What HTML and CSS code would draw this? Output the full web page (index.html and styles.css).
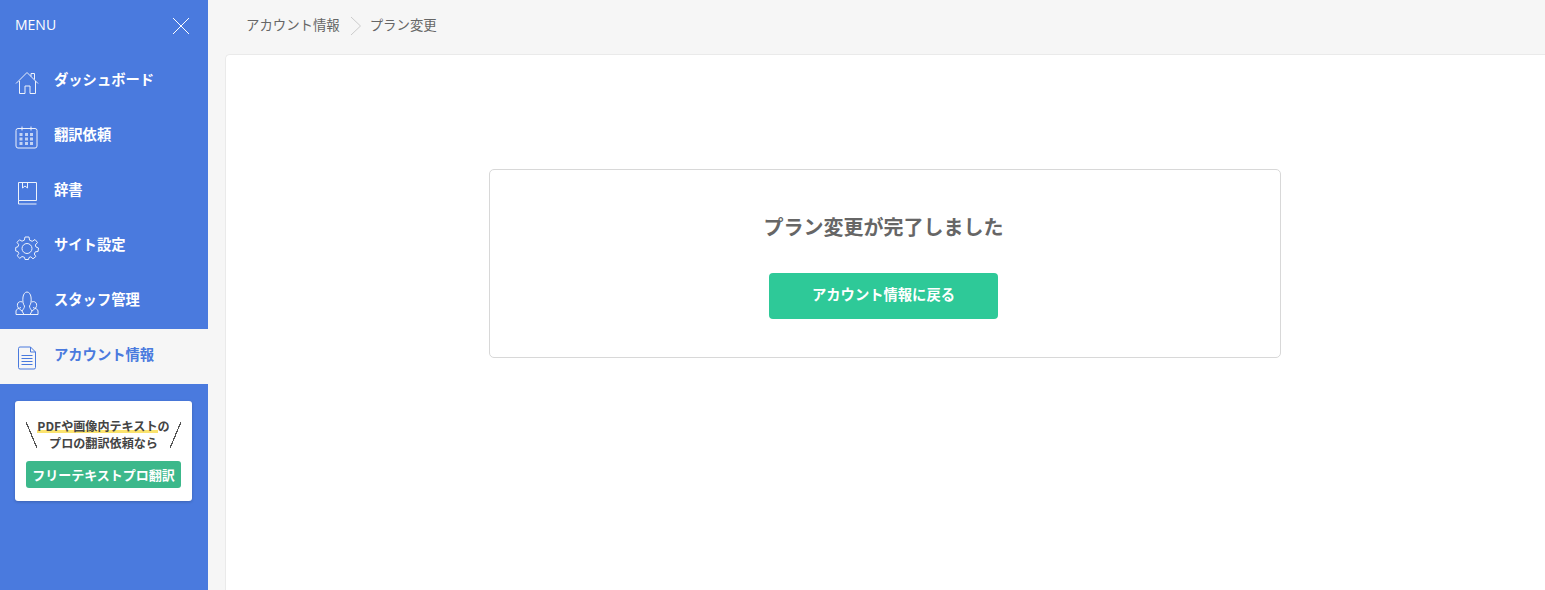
FILE: index.html
```html
<!DOCTYPE html>
<html lang="ja">
<head>
  <meta charset="UTF-8">
  <meta name="viewport" content="width=device-width, initial-scale=1.0">
  <title>アカウント情報</title>
  <link rel="stylesheet" href="styles.css">
</head>
<body>
  <div class="sidebar">
    <div class="menu-head">
      <span>MENU</span>
      <svg class="close-icon" width="18" height="18" viewBox="0 0 18 18"><path d="M1 1 L17 17 M17 1 L1 17"/></svg>
    </div>

    <a class="menu-item">
      <svg class="icon" width="24" height="24" viewBox="0 0 24 24"><path d="M1 12.500 L12 1.500 L23 12.500 M4.500 10 V22.500 H10 V15 H15 V22.500 H20.500 V10 M16 5.500 V2.500 H19.500 V8.500"/></svg>
      <span>ダッシュボード</span>
    </a>
    <a class="menu-item">
      <svg class="icon" width="24" height="24" viewBox="0 0 24 24"><rect x="1" y="2.500" width="21" height="19.500" rx="2"/><path d="M7 0.500 V4.500 M16 0.500 V4.500"/><path class="dots" d="M4.500 7 h3 v3 h-3z M10 7 h3 v3 h-3z M15 7 h3 v3 h-3z M4.500 11.500 h3 v3 h-3z M10 11.500 h3 v3 h-3z M15 11.500 h3 v3 h-3z M4.500 16 h3 v3 h-3z M10 16 h3 v3 h-3z M15 16 h3 v3 h-3z"/></svg>
      <span>翻訳依頼</span>
    </a>
    <a class="menu-item">
      <svg class="icon" width="24" height="24" viewBox="0 0 24 24"><path d="M3.500 19.500 V1.500 H21.500 V19.500 H3.500 M3.500 19.500 V23 H21.500 M7.500 1.500 V7 L10 5 L12.500 7 V1.500"/></svg>
      <span>辞書</span>
    </a>
    <a class="menu-item">
      <svg class="icon" width="24" height="24" viewBox="0 0 24 24"><path d="M10 1 H14 L14.600 4.200 L17.200 5.300 L20 3.500 L22.500 6.500 L20.300 9 L21 11 L23.500 12 L23 15.500 L20.300 15.800 L19.300 18 L20.800 20.500 L18 22.800 L15.800 20.800 L14 21.500 L13.500 23.500 H10 L9.500 21.300 L7 20.500 L4.800 22.300 L2.200 19.800 L3.800 17.500 L2.900 15.500 L0.700 15 V11.500 L3 10.700 L3.700 8.700 L2 6.300 L4.500 3.800 L7 5.200 L9.300 4.200 Z"/><circle cx="12" cy="12.500" r="5"/></svg>
      <span>サイト設定</span>
    </a>
    <a class="menu-item">
      <svg class="icon" width="24" height="24" viewBox="0 0 24 24"><path d="M1 23.500 H23 V20 C23 18 20 17.500 18 16.500 M1 23.500 V20 C1 18 4 17.500 6 16.500 M7 20 C8 18.500 9.500 17 9.500 15 C8 13 7.500 10 8 6 C8.500 3 10 1 12 1 C14 1 15.500 3 16 6 C16.500 10 16 13 14.500 15 C14.500 17 16 18.500 17 20 M7.500 11 C5 10 3 11 2.500 13 C2 15 3 17 4.500 18 L7 20 L9 23.500 M16.500 11 C19 10 21 11 21.500 13 C22 15 21 17 19.500 18 L17 20 L15 23.500"/></svg>
      <span>スタッフ管理</span>
    </a>
    <a class="menu-item active">
      <svg class="icon" width="24" height="24" viewBox="0 0 24 24"><path d="M3.500 2.500 Q3.500 1 5 1 H15.500 L20.500 6 V21.500 Q20.500 23 19 23 H5 Q3.500 23 3.500 21.500 Z M15.500 1 V6 H20.500 M6.500 9.500 H17.500 M6.500 12.500 H17.500 M6.500 15.500 H17.500 M6.500 18.500 H17.500"/></svg>
      <span>アカウント情報</span>
    </a>

    <div class="promo">
      <div class="promo-lead">
        <span class="slash slash-left"></span>
        <p><span class="marker">PDFや画像内テキスト</span>の<br>プロの翻訳依頼なら</p>
        <span class="slash slash-right"></span>
      </div>
      <a class="promo-btn">フリーテキストプロ翻訳</a>
    </div>
  </div>

  <div class="content">
    <div class="breadcrumb">
      <span>アカウント情報</span>
      <svg class="crumb-sep" width="12" height="20" viewBox="0 0 12 20"><path d="M1 1 L10.500 10 L1 19"/></svg>
      <span>プラン変更</span>
    </div>
    <div class="main">
      <div class="done-box">
        <h2>プラン変更が完了しました</h2>
        <a class="back-btn">アカウント情報に戻る</a>
      </div>
    </div>
  </div>
</body>
</html>
```

FILE: styles.css
```css
* {
  box-sizing: border-box;
  margin: 0;
  padding: 0;
}

html, body {
  height: 100%;
  overflow: hidden;
}

body {
  display: flex;
  font-family: "Noto Sans CJK JP", "Noto Sans", sans-serif;
  background-color: #f6f6f6;
  color: #666;
}

.sidebar {
  width: 208px;
  flex-shrink: 0;
  background-color: #4a7ade;
  color: #fff;
}

.menu-head {
  height: 54px;
  padding: 0 18px 6px 15px;
  display: flex;
  justify-content: space-between;
  align-items: center;
  font-size: 14px;
  font-family: "Open Sans", sans-serif;
}

.close-icon {
  margin-top: 4px;
}

.close-icon path {
  fill: none;
  stroke: #fff;
  stroke-width: 1;
}

.menu-item {
  height: 55px;
  padding: 3px 0 0 15px;
  display: flex;
  align-items: center;
  gap: 15px;
  font-size: 14.3px;
  font-weight: 700;
}

.menu-item span {
  margin-top: -10px;
}

.icon {
  fill: none;
  stroke: #fff;
  stroke-width: 1;
  opacity: 0.9;
}

.icon .dots {
  fill: #fff;
  stroke: none;
  opacity: 0.75;
}

.menu-item.active {
  background-color: #f6f6f6;
  color: #4a7ade;
}

.menu-item.active .icon {
  stroke: #4a7ade;
  opacity: 1;
}

.promo {
  width: 177px;
  height: 100px;
  margin: 17px 0 0 15px;
  padding: 16px 11px 0;
  background-color: #fff;
  border-radius: 3px;
  box-shadow: 0 1px 3px rgba(0,0,0,0.2);
}

.promo-lead {
  display: flex;
  justify-content: space-between;
  align-items: center;
  font-size: 12.1px;
  line-height: 17px;
  font-weight: 700;
  color: #444;
  text-align: center;
  white-space: nowrap;
}

.marker {
  display: inline-block;
  border-bottom: 3px solid #fbe36e;
  height: 16px;
}

.slash {
  width: 11px;
  height: 26px;
  flex-shrink: 0;
  margin-top: 2px;
  background: linear-gradient(to top right, transparent 47%, #555 47%, #555 53%, transparent 53%);
}

.slash-right {
  transform: scaleX(-1);
}

.promo-btn {
  display: block;
  height: 27px;
  margin-top: 10px;
  background-color: #3cb88b;
  border-radius: 3px;
  color: #fff;
  font-size: 13px;
  font-weight: 700;
  line-height: 27px;
  text-align: center;
  white-space: nowrap;
}

.content {
  flex: 1;
  min-width: 0;
  display: flex;
  flex-direction: column;
}

.breadcrumb {
  height: 54px;
  padding: 0 0 6px 38px;
  display: flex;
  align-items: center;
  gap: 4px;
  font-size: 13.4px;
  color: #666;
}

.crumb-sep {
  margin: 4px 4px 0 6px;
}

.crumb-sep path {
  fill: none;
  stroke: #ccc;
  stroke-width: 1;
}

.main {
  flex: 1;
  margin-left: 17px;
  padding-top: 114px;
  background-color: #fff;
  border: 1px solid #eaeaea;
  border-right: none;
  border-bottom: none;
  border-radius: 5px 0 0 0;
}

.done-box {
  width: 792px;
  height: 189px;
  margin-left: 263px;
  padding: 42px 3px 0 0;
  border: 1px solid #d8d8d8;
  border-radius: 5px;
  display: flex;
  flex-direction: column;
  align-items: center;
}

.done-box h2 {
  font-size: 20px;
  line-height: 30px;
  font-weight: 700;
  color: #666;
}

.back-btn {
  width: 229px;
  height: 46px;
  margin-top: 31px;
  background-color: #2ec998;
  border-radius: 4px;
  color: #fff;
  font-size: 14.3px;
  font-weight: 700;
  line-height: 42px;
  text-align: center;
}
```
